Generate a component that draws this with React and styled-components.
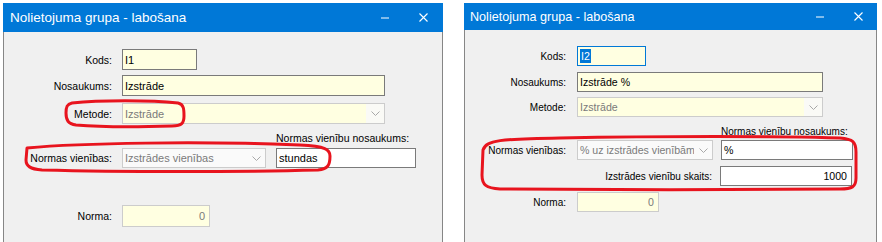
import React from "react";
import styled, { createGlobalStyle } from "styled-components";

const GlobalStyle = createGlobalStyle`
  html, body {
    margin: 0;
    padding: 0;
    background: #ffffff;
  }
  body {
    width: 882px;
    height: 242px;
    overflow: hidden;
    font-family: "Liberation Sans", Arial, sans-serif;
  }
`;

const Page = styled.div`
  position: relative;
  width: 882px;
  height: 242px;
  box-sizing: border-box;
  padding-top: 3px;
  display: flex;
  align-items: stretch;
`;

const Dialog = styled.div`
  margin-left: ${(p) => p.$ml}px;
  width: ${(p) => p.$w}px;
  display: flex;
  flex-direction: column;
`;

const TitleBar = styled.div`
  height: ${(p) => p.$h}px;
  flex-shrink: 0;
  background: #0078d7;
  color: #ffffff;
  display: flex;
  align-items: center;
  padding-left: ${(p) => p.$pl}px;
  font-size: ${(p) => p.$fs}px;
`;

const TitleText = styled.span`
  flex: 1;
  white-space: nowrap;
`;

const WinButton = styled.div`
  width: ${(p) => p.$w}px;
  height: 100%;
  display: flex;
  align-items: center;
  justify-content: center;
`;

const Body = styled.div`
  flex: 1;
  background: #f0f0f0;
  border-left: 1px solid #868686;
  border-right: 1px solid #868686;
  padding-top: ${(p) => p.$pt}px;
  display: flex;
  flex-direction: column;
  --label-fs: ${(p) => p.$fs}px;
  --input-fs: ${(p) => p.$inFs}px;
`;

const Row = styled.div`
  display: flex;
  align-items: center;
  gap: ${(p) => p.$gap}px;
  height: ${(p) => p.$h}px;
  margin-top: ${(p) => p.$mt}px;
`;

const Label = styled.div`
  width: ${(p) => p.$w}px;
  flex-shrink: 0;
  text-align: right;
  font-size: var(--label-fs);
  color: #000000;
  white-space: nowrap;
`;

const Caption = styled.div`
  margin-top: ${(p) => p.$mt}px;
  padding-left: ${(p) => p.$pl}px;
  height: ${(p) => p.$h}px;
  display: flex;
  align-items: center;
  font-size: var(--label-fs);
  color: #000000;
  white-space: nowrap;
`;

const Field = styled.div`
  width: ${(p) => p.$w}px;
  height: 100%;
  margin-left: ${(p) => p.$ml || 0}px;
  box-sizing: border-box;
  flex-shrink: 0;
  display: flex;
  align-items: center;
  justify-content: ${(p) => (p.$right ? "flex-end" : "flex-start")};
  padding: ${(p) => (p.$right ? "0 4px 0 0" : "0 0 0 2px")};
  background: ${(p) => (p.$white ? "#ffffff" : "#ffffe1")};
  border: 1px solid
    ${(p) => (p.$focus ? "#0078d7" : p.$disabled ? "#cccccc" : "#7a7a7a")};
  color: ${(p) => (p.$disabled ? "#7a7a7a" : "#000000")};
  font-size: var(--input-fs);
  white-space: nowrap;
  overflow: hidden;
`;

const Select = styled.div`
  width: ${(p) => p.$w}px;
  height: 100%;
  box-sizing: border-box;
  flex-shrink: 0;
  display: flex;
  align-items: stretch;
  background: ${(p) => (p.$plain ? "#fafafa" : "#ffffe1")};
  border: 1px solid #cccccc;
  color: #7a7a7a;
  font-size: var(--input-fs);
  white-space: nowrap;
  overflow: hidden;
`;

const SelectValue = styled.div`
  flex: 1;
  display: flex;
  align-items: center;
  padding-left: 2px;
  overflow: hidden;
`;

const DropArea = styled.div`
  width: 18px;
  flex-shrink: 0;
  display: flex;
  align-items: center;
  justify-content: center;
  background: ${(p) => (p.$plain ? "transparent" : "#fafaf6")};
`;

const Selected = styled.span`
  background: #0078d7;
  color: #ffffff;
  padding: 0 1px;
  line-height: 14px;
`;

const Overlay = styled.svg`
  position: absolute;
  top: 0;
  left: 0;
  pointer-events: none;
`;

const Minimize = () => (
  <svg width="8" height="2" viewBox="0 0 8 2">
    <line x1="0" y1="1" x2="8" y2="1" stroke="#ffffff" strokeWidth="1" />
  </svg>
);

const Close = () => (
  <svg width="9" height="9" viewBox="0 0 9 9">
    <path d="M0.5 0.5 L8.5 8.5 M8.5 0.5 L0.5 8.5" stroke="#ffffff" strokeWidth="1.1" />
  </svg>
);

const Chevron = () => (
  <svg width="9" height="5" viewBox="0 0 9 5">
    <polyline points="0.5,0.5 4.5,4.5 8.5,0.5" fill="none" stroke="#a8a8a8" strokeWidth="1" />
  </svg>
);

const Dropdown = ({ w, value, plain }) => (
  <Select $w={w} $plain={plain}>
    <SelectValue>{value}</SelectValue>
    <DropArea $plain={plain}>
      <Chevron />
    </DropArea>
  </Select>
);

const App = () => {
  return (
    <>
      <GlobalStyle />
      <Page>
        <Dialog $ml={3} $w={440}>
          <TitleBar $h={29} $pl={7} $fs={13.5}>
            <TitleText>Nolietojuma grupa - labošana</TitleText>
            <WinButton $w={39}>
              <Minimize />
            </WinButton>
            <WinButton $w={39}>
              <Close />
            </WinButton>
          </TitleBar>
          <Body $pt={17} $fs={10.5} $inFs={11}>
            <Row $mt={0} $h={21} $gap={10}>
              <Label $w={108}>Kods:</Label>
              <Field $w={75}>I1</Field>
            </Row>
            <Row $mt={5} $h={21} $gap={10}>
              <Label $w={108}>Nosaukums:</Label>
              <Field $w={263}>Izstrāde</Field>
            </Row>
            <Row $mt={7} $h={21} $gap={10}>
              <Label $w={108}>Metode:</Label>
              <Dropdown w={263} value="Izstrāde" />
            </Row>
            <Caption $mt={7} $h={14} $pl={272}>
              Normas vienību nosaukums:
            </Caption>
            <Row $mt={3} $h={20} $gap={10}>
              <Label $w={108}>Normas vienības:</Label>
              <Dropdown w={144} value="Izstrādes vienības" plain />
              <Field $w={140} $white>
                stundas
              </Field>
            </Row>
            <Row $mt={37} $h={22} $gap={10}>
              <Label $w={108}>Norma:</Label>
              <Field $w={88} $right $disabled>
                0
              </Field>
            </Row>
          </Body>
        </Dialog>

        <Dialog $ml={21} $w={413}>
          <TitleBar $h={27} $pl={6} $fs={12.6}>
            <TitleText>Nolietojuma grupa - labošana</TitleText>
            <WinButton $w={38}>
              <Minimize />
            </WinButton>
            <WinButton $w={38}>
              <Close />
            </WinButton>
          </TitleBar>
          <Body $pt={16} $fs={10} $inFs={10.6}>
            <Row $mt={0} $h={20} $gap={11}>
              <Label $w={101}>Kods:</Label>
              <Field $w={69} $focus>
                <Selected>I2</Selected>
              </Field>
            </Row>
            <Row $mt={6} $h={20} $gap={11}>
              <Label $w={101}>Nosaukums:</Label>
              <Field $w={246}>Izstrāde %</Field>
            </Row>
            <Row $mt={5} $h={20} $gap={11}>
              <Label $w={101}>Metode:</Label>
              <Dropdown w={246} value="Izstrāde" />
            </Row>
            <Caption $mt={8} $h={13} $pl={256}>
              Normas vienību nosaukums:
            </Caption>
            <Row $mt={2} $h={20} $gap={11}>
              <Label $w={101}>Normas vienības:</Label>
              <Dropdown w={136} value="% uz izstrādes vienībām" plain />
              <Field $w={132} $white $ml={-3}>
                %
              </Field>
            </Row>
            <Row $mt={6} $h={20} $gap={8}>
              <Label $w={247}>Izstrādes vienību skaits:</Label>
              <Field $w={132} $white $right>
                1000
              </Field>
            </Row>
            <Row $mt={6} $h={20} $gap={11}>
              <Label $w={101}>Norma:</Label>
              <Field $w={82} $right $disabled>
                0
              </Field>
            </Row>
          </Body>
        </Dialog>

        <Overlay width="882" height="242" viewBox="0 0 882 242">
          <g fill="none" stroke="#e8141e" strokeWidth="3" strokeLinejoin="round">
            <path d="M72 103 C100 100, 150 100, 178 103 C184 104, 184 110, 184 116 C184 123, 182 126, 172 126 C140 127, 100 127, 76 125 C68 124, 66 120, 66 113 C66 107, 67 104, 72 103 Z" />
            <path d="M27 148 C80 143, 200 141, 300 145 C326 146, 330 150, 330 156 C330 165, 328 169, 318 170 C240 172, 120 172, 42 170 C30 169, 26 166, 26 160 Z" />
            <path d="M483 150 C486 140, 500 139, 560 138 C660 136, 780 136, 840 138 C853 139, 856 142, 856 152 L856 178 C856 187, 852 189, 840 189 C740 190, 600 190, 500 189 C486 188, 482 185, 482 175 Z" />
          </g>
        </Overlay>
      </Page>
    </>
  );
};

export default App;
